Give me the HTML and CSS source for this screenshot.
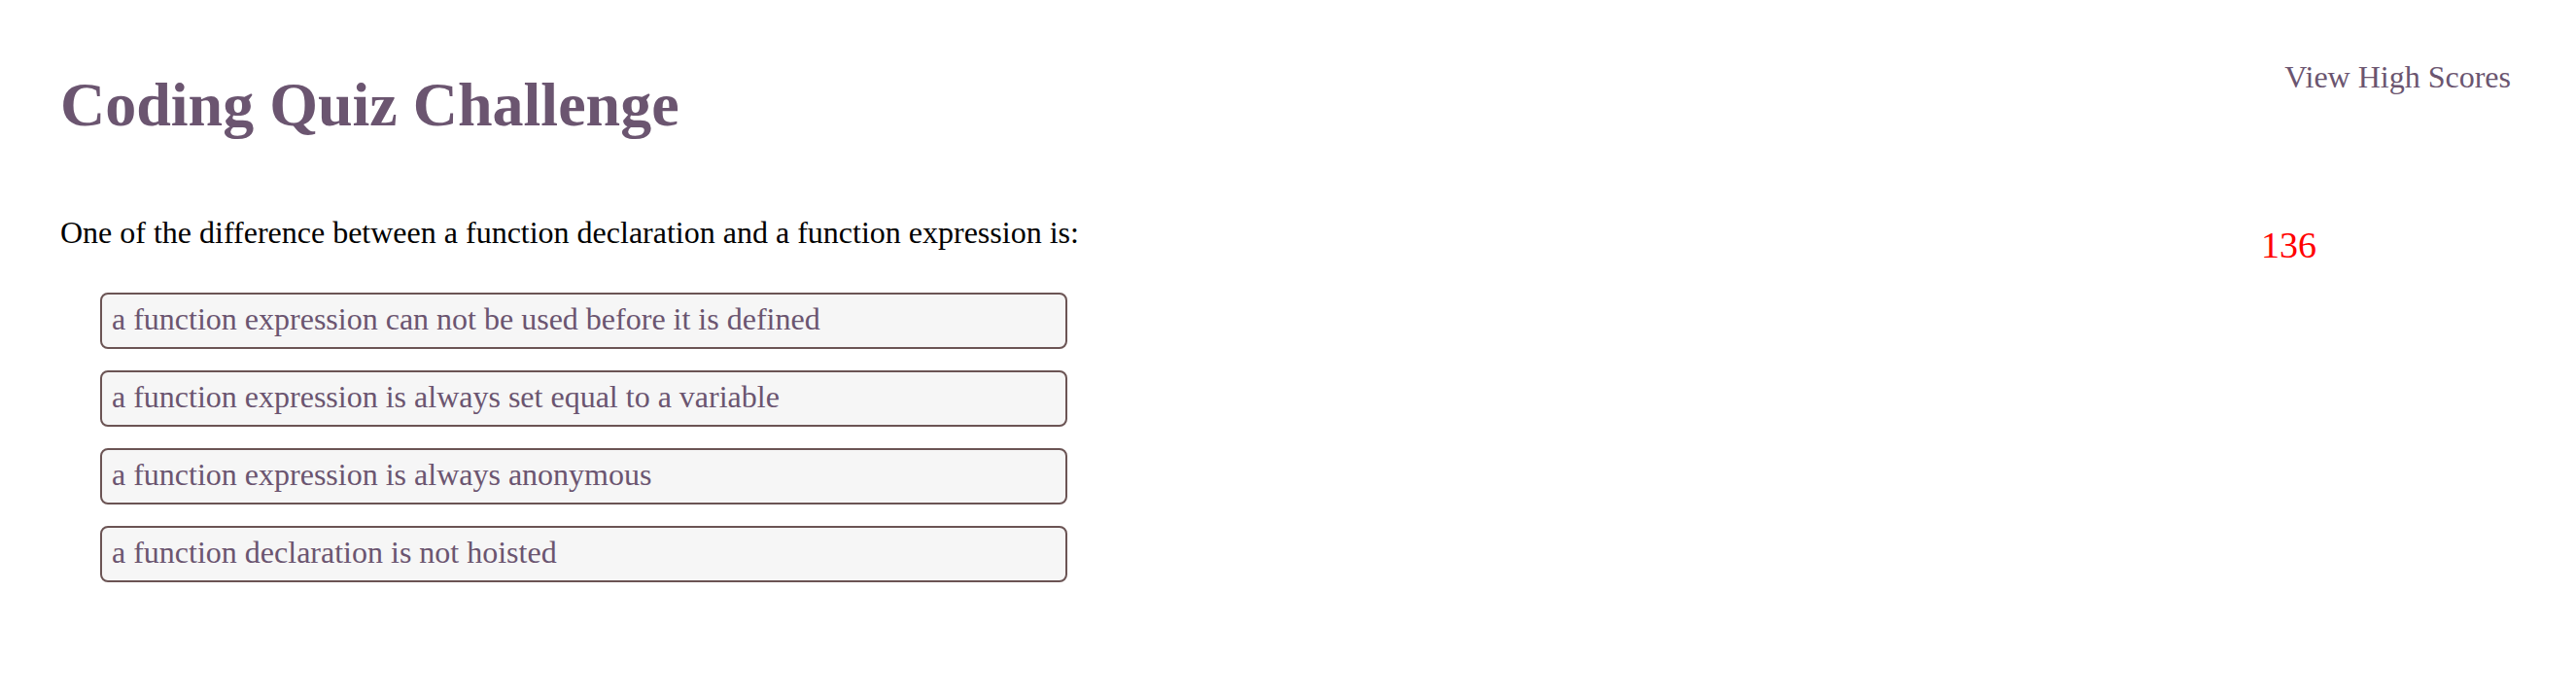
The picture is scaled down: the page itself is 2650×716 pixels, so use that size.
FILE: index.html
```html
<!DOCTYPE html>
<html lang="en">
<head>
<meta charset="utf-8">
<title>Coding Quiz Challenge</title>
<link rel="stylesheet" href="styles.css">
</head>
<body>
<div class="page">
  <header class="header">
    <h1 class="title">Coding Quiz Challenge</h1>
    <a class="scores-link" href="#">View High Scores</a>
  </header>
  <main class="main">
    <section class="quiz">
      <p class="question">One of the difference between a function declaration and a function expression is:</p>
      <div class="answers">
        <button class="answer">a function expression can not be used before it is defined</button>
        <button class="answer">a function expression is always set equal to a variable</button>
        <button class="answer">a function expression is always anonymous</button>
        <button class="answer">a function declaration is not hoisted</button>
      </div>
    </section>
    <div class="timer">136</div>
  </main>
</div>
</body>
</html>
```
FILE: styles.css
```css
html, body {
  margin: 0;
  padding: 0;
  background: #ffffff;
}
body {
  font-family: "Liberation Serif", "Times New Roman", serif;
  color: #000;
}
.page {
  padding: 0 67px 0 62px;
}
.header {
  display: flex;
  justify-content: space-between;
  align-items: flex-start;
}
.title {
  margin: 76px 0 0 0;
  font-size: 64px;
  line-height: 64px;
  font-weight: bold;
  color: #6b5570;
}
.scores-link {
  margin-top: 61px;
  font-size: 32px;
  line-height: 36px;
  color: #6b5570;
  text-decoration: none;
}
.main {
  display: flex;
  align-items: flex-start;
}
.quiz {
  flex: 1;
}
.question {
  margin: 83px 0 0 0;
  font-size: 32px;
  line-height: 32px;
}
.answers {
  display: flex;
  flex-direction: column;
  gap: 22px;
  margin: 46px 0 0 41px;
  width: 995px;
}
.answer {
  box-sizing: border-box;
  height: 58px;
  padding: 8px 10px 12px 10px;
  text-align: left;
  font-family: "Liberation Serif", "Times New Roman", serif;
  font-size: 32px;
  line-height: 34px;
  color: #6b5570;
  background: #f6f6f6;
  border: 2px solid #6b5454;
  border-radius: 8px;
}
.timer {
  margin: 92px 200px 0 0;
  font-size: 38px;
  line-height: 40px;
  color: #ff0000;
}
```
